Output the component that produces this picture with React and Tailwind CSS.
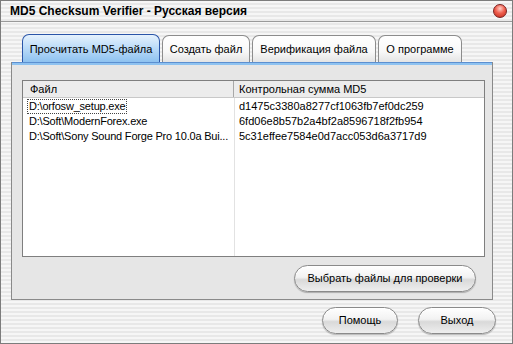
import React from 'react';

const stripes =
  'bg-[repeating-linear-gradient(180deg,#f6f6f6_0px,#f6f6f6_2px,#e8e8e8_2px,#e8e8e8_4px)]';

const files = [
  { path: 'D:\\orfosw_setup.exe', hash: 'd1475c3380a8277cf1063fb7ef0dc259', focus: true },
  { path: 'D:\\Soft\\ModernForex.exe', hash: '6fd06e8b57b2a4bf2a8596718f2fb954' },
  { path: 'D:\\Soft\\Sony Sound Forge Pro 10.0a Bui...', hash: '5c31effee7584e0d7acc053d6a3717d9' },
];

const tabs = ['Просчитать MD5-файла', 'Создать файл', 'Верификация файла', 'О программе'];
const tabWidths = [138, 88, 124, 84];

const PillButton = ({ children, className }) => (
  <button
    className={`h-[27px] rounded-full border border-[#8a8a8a] bg-[linear-gradient(180deg,#ffffff_0%,#f2f2f2_45%,#d9d9d9_55%,#eeeeee_100%)] text-[11px] text-black shadow-[inset_0_1px_0_#fff,0_1px_1px_rgba(0,0,0,0.25)] ${className}`}
  >
    {children}
  </button>
);

const App = () => {
  return (
    <div
      className={`w-[513px] h-[344px] flex flex-col border border-[#7c7c7c] ${stripes} font-['Liberation_Sans',Arial,sans-serif] text-black`}
    >
      {/* title bar */}
      <div className="h-[21px] flex items-center justify-between pl-[9px] pr-[5px] border-b border-[#9a9a9a]">
        <span className="text-[12px] font-bold">MD5 Checksum Verifier - Русская версия</span>
        <span className="w-[14px] h-[14px] rounded-full border border-[#7a2020] bg-[radial-gradient(circle_at_50%_30%,#ffd0c8_0%,#f06050_45%,#c02818_100%)]" />
      </div>

      <div className="flex-1 flex flex-col pl-[10px] pr-[19px]">
        {/* tabs */}
        <div className="flex items-end gap-[2px] pl-[11px] mt-[12px] h-[28px]">
          {tabs.map((t, i) => (
            <div
              key={t}
              className={
                i === 0
                  ? 'h-[28px] flex items-center justify-center pt-[2px] rounded-t-[7px] border border-b-0 border-[#2a55a8] bg-[linear-gradient(180deg,#e6f2fd_0%,#b9daf8_50%,#8ec2f0_100%)] text-[11px] whitespace-nowrap'
                  : 'h-[27px] flex items-center justify-center pt-[1px] rounded-t-[7px] border border-b-0 border-[#8c8c8c] bg-[linear-gradient(180deg,#ffffff_0%,#f8f8f8_60%,#e4e4e4_100%)] text-[11px] whitespace-nowrap'
              }
              style={{ width: tabWidths[i] }}
            >
              {t}
            </div>
          ))}
        </div>

        {/* panel */}
        <div className="h-[238px] flex flex-col bg-[#e6e6e6] border border-[#8a8a8a] border-t-0">
          <div className="h-[3px] bg-[#8ec2f0] border-t border-[#5c8fd0]" />
          <div className="flex-1 flex flex-col pl-[10px] pr-[7px] pt-[15px]">
            <div className="h-[177px] bg-white border border-[#7f7f7f] flex flex-col text-[11px]">
              <div className="h-[17px] flex bg-[#ececec] border-b border-[#c8c8c8]">
                <div className="w-[211px] pl-[7px] flex items-center border-r border-[#a8a8a8]">Файл</div>
                <div className="flex-1 pl-[5px] flex items-center">Контрольная сумма MD5</div>
              </div>
              <div className="flex-1 flex relative">
                <div className="absolute left-[211px] top-0 bottom-0 w-px bg-[#e2e2e2]" />
                <div className="flex-1 flex flex-col pt-[1px]">
                  {files.map((f) => (
                    <div key={f.path} className="h-[15px] flex items-center whitespace-nowrap">
                      <div className="w-[211px] pl-[4px] flex items-center">
                        <span
                          className={`px-[1px] leading-[13px] tracking-[-0.2px] border border-dotted ${
                            f.focus ? 'border-[#444]' : 'border-transparent'
                          }`}
                        >
                          {f.path}
                        </span>
                      </div>
                      <div className="flex-1 pl-[5px]">{f.hash}</div>
                    </div>
                  ))}
                </div>
              </div>
            </div>
            <div className="flex justify-end pr-[9px] mt-[8px]">
              <PillButton className="w-[182px]">Выбрать файлы для проверки</PillButton>
            </div>
          </div>
        </div>

        {/* footer */}
        <div className="flex justify-end gap-[20px] mt-[7px] mr-[-3px]">
          <PillButton className="w-[76px]">Помощь</PillButton>
          <PillButton className="w-[78px]">Выход</PillButton>
        </div>
      </div>
    </div>
  );
};

export default App;
